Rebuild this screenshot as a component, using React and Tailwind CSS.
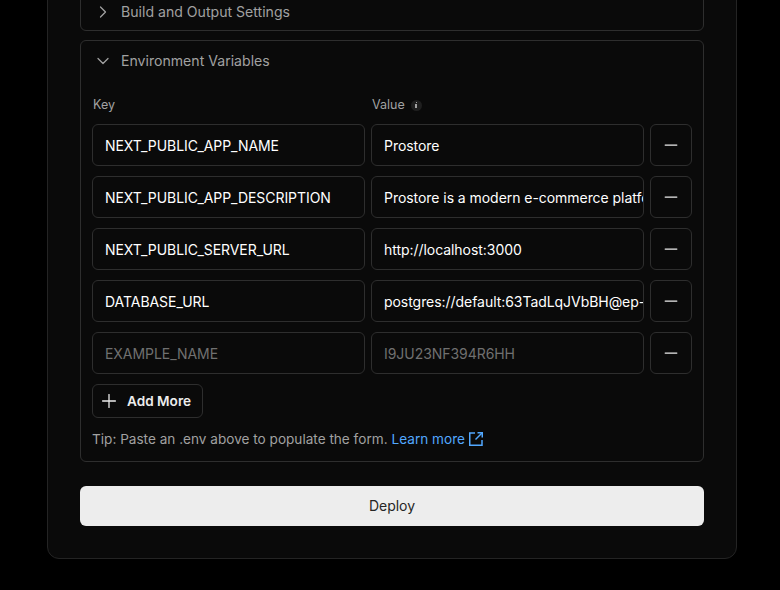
import React from "react";
import { ChevronRight, ChevronDown, Minus, Plus } from "lucide-react";

const rows = [
    { key: "NEXT_PUBLIC_APP_NAME", value: "Prostore" },
    { key: "NEXT_PUBLIC_APP_DESCRIPTION", value: "Prostore is a modern e-commerce platform built with Next.js" },
    { key: "NEXT_PUBLIC_SERVER_URL", value: "http://localhost:3000" },
    { key: "DATABASE_URL", value: "postgres://default:63TadLqJVbBH@ep-wild-sun-a4f2.us-east-1.aws.neon.tech" },
];

function Field({ value, placeholder }) {
    return (
        <input
            readOnly
            defaultValue={value}
            placeholder={placeholder}
            className="h-[42px] min-w-0 flex-1 rounded-md border border-[#2e2e2e] bg-[#0a0a0a] pl-3 text-sm tracking-[-0.05px] text-white outline-none placeholder:text-[#707070]"
        />
    );
}

function RemoveButton() {
    return (
        <button className="flex h-[42px] w-[42px] shrink-0 items-center justify-center rounded-md border border-[#2e2e2e] text-[#ededed]">
            <Minus size={20} strokeWidth={1.5} />
        </button>
    );
}

function ExternalIcon() {
    return (
        <svg width="16" height="16" viewBox="0 0 16 16" fill="none" stroke="currentColor" strokeWidth="1.5">
            <path d="M7 2H1.75v12.25H14V9" />
            <path d="M9.5 1.75h4.75V6.5" />
            <path d="M14 2L7.5 8.5" />
        </svg>
    );
}

export default function App() {
    return (
        <div className="flex h-[590px] flex-col justify-end overflow-hidden bg-black pb-[31px] font-['Inter',sans-serif]">
            <div className="mr-[43px] ml-[47px] flex flex-col rounded-xl border border-[#242424] bg-[#0a0a0a] px-8 pb-8">
                <div className="flex h-[62px] items-end rounded-md border border-[#2e2e2e] pb-2 pl-3 text-[14.1px] text-[#a1a1a1]">
                    <ChevronRight size={20} strokeWidth={1.5} />
                    <span className="ml-2 leading-5">Build and Output Settings</span>
                </div>

                <div className="mt-[9px] rounded-md border border-[#2e2e2e] px-[11px] pb-3">
                    <div className="flex h-10 items-center pl-[1px] text-[14.1px] text-[#a1a1a1]">
                        <ChevronDown size={20} strokeWidth={1.5} />
                        <span className="ml-2">Environment Variables</span>
                    </div>

                    <div className="mt-[14px] flex gap-[6px] pr-[48px] text-[12.5px] leading-5 text-[#a1a1a1]">
                        <span className="flex-1 pl-px">Key</span>
                        <span className="flex flex-1 items-center gap-[6px] pl-px">
                            Value
                            <span className="flex h-[11px] w-[11px] flex-col items-center justify-center gap-px rounded-full bg-[#1f1f1f]">
                                <span className="h-px w-px bg-[#a1a1a1]" />
                                <span className="h-[4px] w-[1.5px] bg-[#a1a1a1]" />
                            </span>
                        </span>
                    </div>

                    <div className="mt-[9px] flex flex-col gap-[10px]">
                        {rows.map((r) => (
                            <div key={r.key} className="flex gap-[6px]">
                                <Field value={r.key} />
                                <Field value={r.value} />
                                <RemoveButton />
                            </div>
                        ))}
                        <div className="flex gap-[6px]">
                            <Field placeholder="EXAMPLE_NAME" />
                            <Field placeholder="I9JU23NF394R6HH" />
                            <RemoveButton />
                        </div>
                    </div>

                    <button className="mt-[10px] flex h-[34px] w-[111px] items-center rounded-md border border-[#2e2e2e] pl-[5px] text-[13.6px] font-semibold text-[#ededed]">
                        <Plus size={22} strokeWidth={1.4} />
                        <span className="ml-[7px]">Add More</span>
                    </button>

                    <p className="mt-[11px] flex items-center text-[13.6px] leading-5 text-[#a1a1a1]">
                        Tip: Paste an .env above to populate the form.
                        <a className="ml-1 flex items-center gap-[3px] text-[#52a8ff]">
                            Learn more
                            <ExternalIcon />
                        </a>
                    </p>
                </div>

                <button className="mt-6 h-10 rounded-md bg-[#ededed] text-sm font-normal text-[#262626]">Deploy</button>
            </div>
        </div>
    );
}
